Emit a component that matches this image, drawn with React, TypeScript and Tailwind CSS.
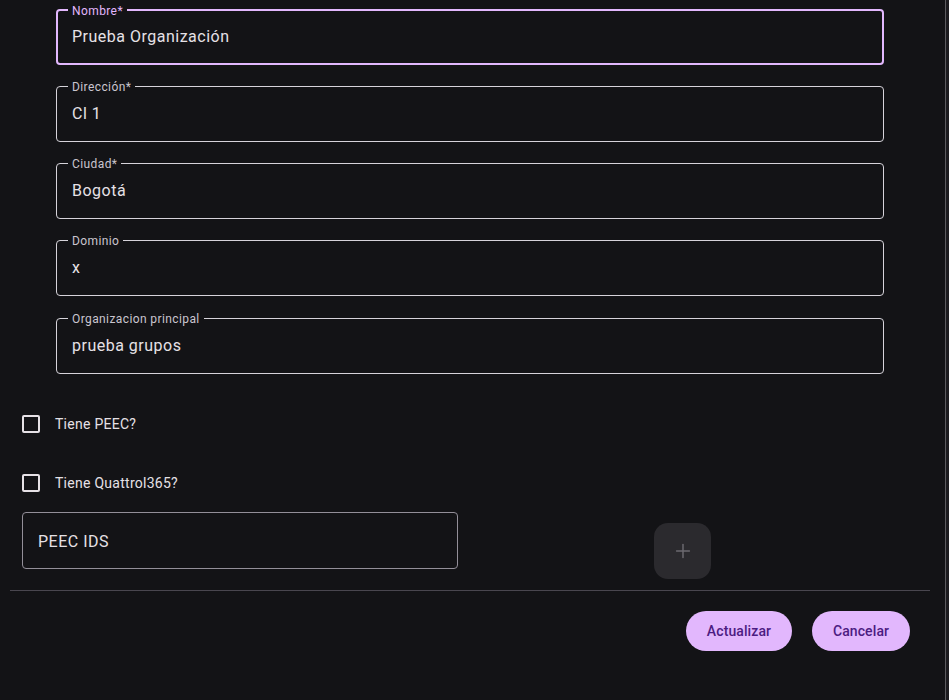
import { Plus } from "lucide-react";

const font = { fontFamily: "Roboto, 'Liberation Sans', sans-serif" };

function OutlinedField({
  label,
  value,
  focused = false,
}: {
  label: string;
  value: string;
  focused?: boolean;
}) {
  return (
    <div
      className={`relative flex h-[56px] items-center rounded-[4px] ${
        focused ? "border-2 border-[#e2b7fd] pl-[14px]" : "border border-[#d6d3da] pl-[15px]"
      }`}
    >
      <span
        className={`absolute top-0 -translate-y-1/2 bg-[#131316] px-[4px] text-[12px] leading-none tracking-[0.4px] ${
          focused ? "left-[10px] text-[#e2b7fd]" : "left-[11px] text-[#cac5cf]"
        }`}
      >
        {label}
      </span>
      <span className="text-[16px] tracking-[0.5px] text-[#e6e1e6]">{value}</span>
    </div>
  );
}

function CheckRow({ label }: { label: string }) {
  return (
    <div className="flex h-[18px] items-center">
      <span className="ml-[22px] block h-[18px] w-[18px] rounded-[2px] border-2 border-[#e6e1e6]" />
      <span className="ml-[15px] text-[14px] tracking-[0.27px] text-[#e6e1e6]">{label}</span>
    </div>
  );
}

export default function App() {
  return (
    <div className="flex h-[700px] w-full bg-[#131316]" style={font}>
      <div className="flex w-[945px] shrink-0 flex-col">
        {/* organisation fields */}
        <div className="ml-[56px] mt-[9px] flex w-[828px] flex-col gap-[21px]">
          <OutlinedField label="Nombre*" value="Prueba Organización" focused />
          <OutlinedField label="Dirección*" value="Cl 1" />
          <OutlinedField label="Ciudad*" value="Bogotá" />
          <OutlinedField label="Dominio" value="x" />
          <div className="mt-[1px]">
            <OutlinedField label="Organizacion principal" value="prueba grupos" />
          </div>
        </div>

        <div className="mt-[41px] flex flex-col gap-[41px]">
          <CheckRow label="Tiene PEEC?" />
          <CheckRow label="Tiene Quattrol365?" />
        </div>

        {/* PEEC ids + add */}
        <div className="mt-[20px] flex items-start">
          <div className="ml-[22px] flex h-[57px] w-[436px] items-center rounded-[4px] border border-[#938f99] pl-[15px] pt-[3px]">
            <span className="text-[16px] tracking-[0.5px] text-[#e6e1e6]">PEEC IDS</span>
          </div>
          <button className="ml-[196px] mt-[11px] flex h-[56px] w-[57px] items-center justify-center rounded-[14px] bg-[#2b2a2e] text-[#6c6a70]">
            <Plus size={22} strokeWidth={1.6} />
          </button>
        </div>

        <div className="ml-[10px] mt-[11px] h-px w-[920px] bg-[#49464f]" />

        <div className="mr-[35px] mt-[20px] flex justify-end gap-[20px]">
          <button className="h-[40px] w-[106px] rounded-full bg-[#e2b7fd] text-[14px] font-medium tracking-[0.1px] text-[#4c1c82]">
            Actualizar
          </button>
          <button className="h-[40px] w-[98px] rounded-full bg-[#e2b7fd] text-[14px] font-medium tracking-[0.1px] text-[#4c1c82]">
            Cancelar
          </button>
        </div>
      </div>
      <div className="h-full w-px bg-[#5c5b5f]" />
      <div className="h-full flex-1 bg-[#1c1b1f]" />
    </div>
  );
}
